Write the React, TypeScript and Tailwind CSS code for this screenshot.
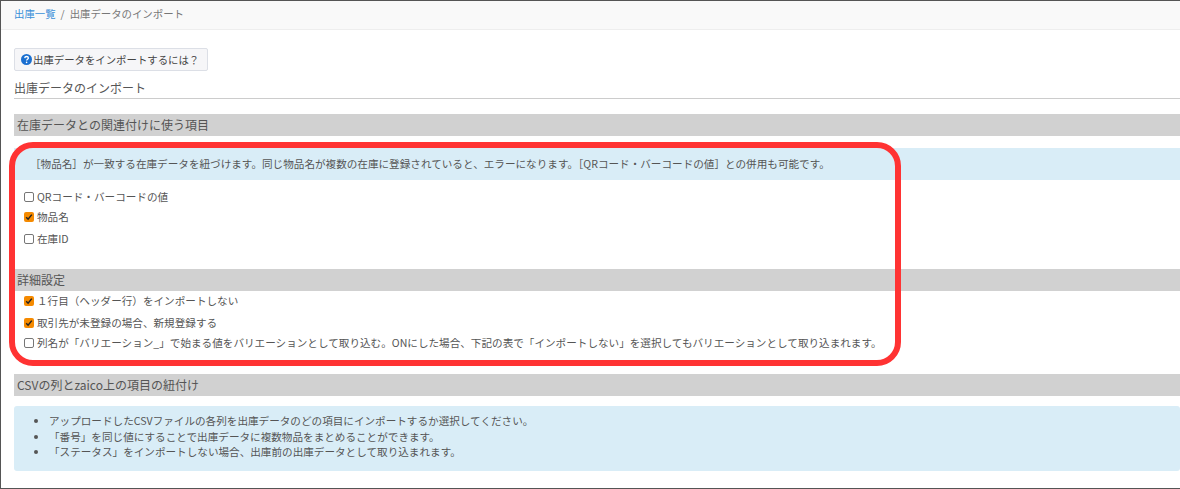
import React from 'react';

const font = { fontFamily: '"Noto Sans CJK JP", "Liberation Sans", sans-serif' };

const SectionBar = ({ title, className = '' }: { title: string; className?: string }) => (
    <div className={`h-[22px] bg-[#d1d1d1] pl-[3px] flex items-center text-xs text-[#555] ${className}`}>{title}</div>
);

const CheckRow = ({ label, checked, className = '' }: { label: string; checked?: boolean; className?: string }) => (
    <div className={`flex items-center h-[20px] pl-[10px] text-[10.6px] text-[#555] whitespace-nowrap ${className}`}>
        {checked ? (
            <span className="w-[10px] h-[10px] rounded-[2px] bg-[#f58a00] flex items-center justify-center shrink-0">
                <svg width="8" height="8" viewBox="0 0 8 8" fill="none">
                    <path d="M1.2 4.2 3.1 6.2 6.8 1.6" stroke="#222" strokeWidth="1.5" />
                </svg>
            </span>
        ) : (
            <span className="w-[10px] h-[10px] rounded-[2px] border border-[#767676] bg-white shrink-0" />
        )}
        <span className="ml-[3px]">{label}</span>
    </div>
);

export default function App() {
    return (
        <div style={font} className="relative w-[1180px] h-[489px] overflow-hidden bg-white border-l border-t border-b border-[#555]">
            <nav className="h-[29px] bg-[#f9f9f9] border-b border-[#eeeeee] pl-[13px] pb-[3px] flex items-center gap-[5px] text-[10.4px] text-[#777]">
                <a className="text-[#3b8fd8]">出庫一覧</a>
                <span>/</span>
                <span>出庫データのインポート</span>
            </nav>

            <div className="pl-[13px] pt-[18px]">
                <button className="h-[23px] w-[194px] flex items-center pl-[5px] bg-[#f6f6f8] border border-[#dcdfe6] rounded-[2px] text-[10.4px] text-[#444] whitespace-nowrap">
                    <svg width="13" height="13" viewBox="0 0 13 13" className="shrink-0">
                        <circle cx="6.5" cy="6.5" r="5.5" fill="#1a6fd0" />
                        <path d="M4.7 5.1c.1-1.1.9-1.6 1.9-1.6s1.8.6 1.8 1.5c0 1.3-1.8 1.3-1.8 2.6" stroke="#fff" strokeWidth="1.3" fill="none" />
                        <circle cx="6.6" cy="9.4" r=".8" fill="#fff" />
                    </svg>
                    出庫データをインポートするには？
                </button>

                <h2 className="h-[25px] mt-[3px] pt-[4px] border-b border-[#cccccc] flex items-center text-xs font-normal text-[#555]">出庫データのインポート</h2>

                <SectionBar title="在庫データとの関連付けに使う項目" className="mt-[15px]" />

                <div className="mt-[12px] h-[32px] bg-[#d9edf7] pl-[16px] flex items-center text-[10.6px] text-[#555] whitespace-nowrap">
                    ［物品名］が一致する在庫データを紐づけます。同じ物品名が複数の在庫に登録されていると、エラーになります。［QRコード・バーコードの値］との併用も可能です。
                </div>

                <div className="mt-[7px]">
                    <CheckRow label="QRコード・バーコードの値" />
                    <CheckRow label="物品名" checked />
                    <CheckRow label="在庫ID" className="mt-[2px]" />
                </div>

                <SectionBar title="詳細設定" className="mt-[20px]" />

                <div>
                    <CheckRow label="１行目（ヘッダー行）をインポートしない" checked />
                    <CheckRow label="取引先が未登録の場合、新規登録する" checked className="mt-[2px]" />
                    <CheckRow label="列名が「バリエーション_」で始まる値をバリエーションとして取り込む。ONにした場合、下記の表で「インポートしない」を選択してもバリエーションとして取り込まれます。" />
                </div>

                <SectionBar title="CSVの列とzaico上の項目の紐付け" className="mt-[21px]" />

                <div className="mt-[10px] h-[65px] bg-[#d9edf7] rounded-[3px] pl-[35px] pt-[7px] text-[10.6px] leading-[15.5px] text-[#555]">
                    <ul className="list-disc">
                        <li>アップロードしたCSVファイルの各列を出庫データのどの項目にインポートするか選択してください。</li>
                        <li>「番号」を同じ値にすることで出庫データに複数物品をまとめることができます。</li>
                        <li>「ステータス」をインポートしない場合、出庫前の出庫データとして取り込まれます。</li>
                    </ul>
                </div>
            </div>

            {/* red annotation drawn over the screenshot */}
            <div className="absolute left-[8px] top-[141px] w-[892px] h-[224px] border-[6px] border-[#ff3333] rounded-[24px] pointer-events-none" />
        </div>
    );
}
